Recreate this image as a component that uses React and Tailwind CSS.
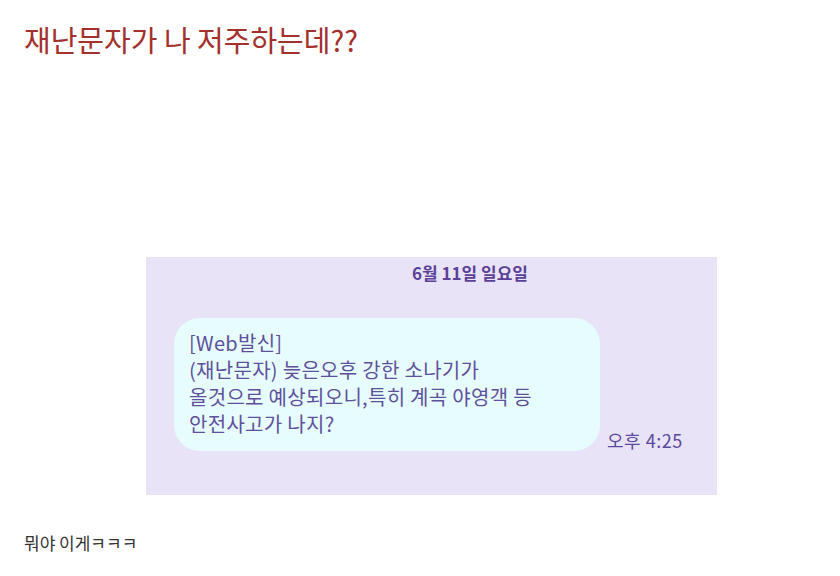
import React from 'react';

const kr = { fontFamily: '"Noto Sans CJK KR", "Noto Sans", sans-serif' };

export default function App() {
  return (
    <div className="w-[840px] h-[576px] bg-white overflow-hidden" style={kr}>
      {/* Post title */}
      <h1 className="pl-[24px] pt-[19px] text-[29px] leading-[40px] text-[#a3302c]">
        재난문자가 나 저주하는데??
      </h1>

      {/* Screenshot of the text message */}
      <div className="mt-[198px] ml-[146px] w-[571px] h-[238px] bg-[#e9e3f8] flex flex-col">
        <div className="pl-[266px] pt-[4px] text-[17px] leading-[24px] font-bold text-[#5a4197]">
          6월 11일 일요일
        </div>
        <div className="mt-[33px] pl-[28px] flex items-end gap-[7px]">
          <div className="w-[426px] h-[133px] rounded-[26px] bg-[#e7fcfd] px-[15px] pt-[11px] text-[20px] leading-[27px] tracking-[0.3px] text-[#5d519c]">
            <p>[Web발신]</p>
            <p>(재난문자) 늦은오후 강한 소나기가</p>
            <p>올것으로 예상되오니,특히 계곡 야영객 등</p>
            <p>안전사고가 나지?</p>
          </div>
          <div className="text-[18px] leading-[22px] tracking-[0.5px] text-[#5a4a9c]">오후 4:25</div>
        </div>
      </div>

      <p className="pl-[24px] mt-[38px] text-[17px] leading-[20px] text-[#333333]">뭐야 이게ㅋㅋㅋ</p>
    </div>
  );
}
